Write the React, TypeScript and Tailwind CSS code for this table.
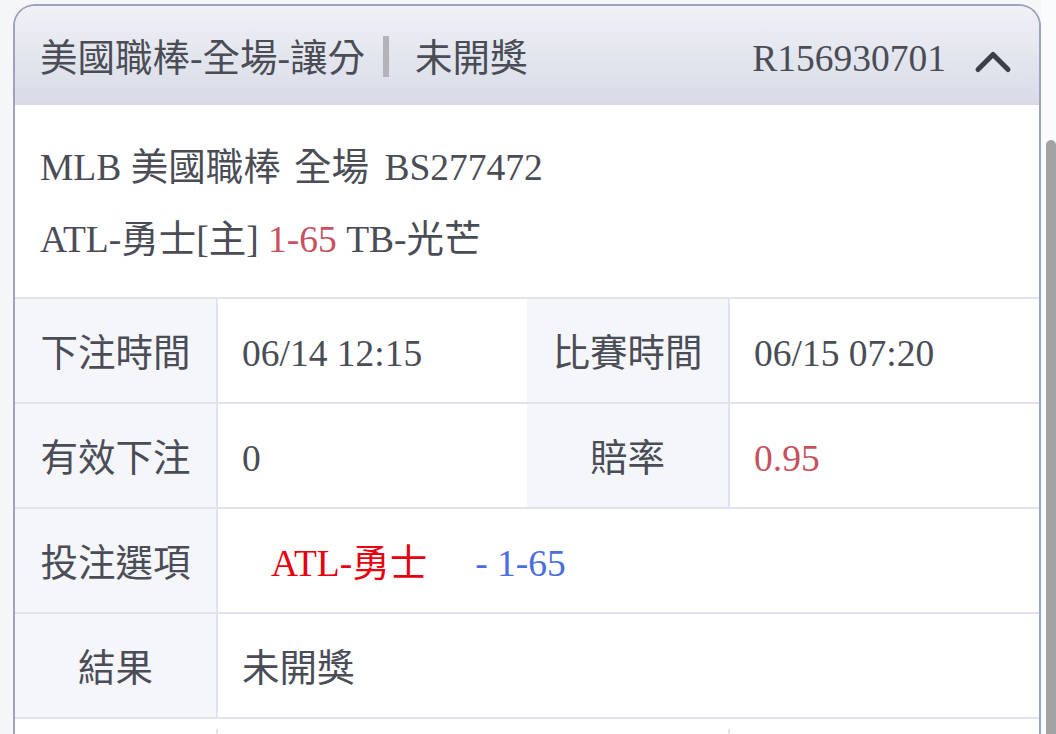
const FONT = 'font-["Liberation_Serif","Noto_Sans_CJK_TC",serif]'

function Label({ children }: { children: React.ReactNode }) {
  return (
    <div className="w-[203px] shrink-0 flex items-center justify-center pt-[8px] bg-[#f5f6fa] border-r-2 border-[#e0e2ef]">
      {children}
    </div>
  )
}

function Value({ children, wide }: { children?: React.ReactNode; wide?: boolean }) {
  return (
    <div className={`${wide ? 'flex-1' : 'w-[309px] shrink-0'} flex items-center pl-6 pt-[8px] bg-white`}>
      {children}
    </div>
  )
}

function Row({ children }: { children: React.ReactNode }) {
  return <div className="flex h-[105px] border-t-2 border-[#e0e2ef]">{children}</div>
}

export default function App() {
  return (
    <div className={`w-[1056px] h-[734px] overflow-hidden bg-[#f5f6f8] flex ${FONT} text-[37.5px] text-[#4a4c56]`}>
      <div className="ml-[13px] mt-[4px] w-[1028px] shrink-0 border-2 border-b-0 border-[#9da2bd] rounded-t-[22px] overflow-hidden bg-white">
        {/* Header */}
        <div className="h-[99px] flex items-center justify-between pl-[25px] pr-[26px] pt-[8px] bg-gradient-to-b from-[#f0f1f6] to-[#d8dbe7]">
          <div className="flex items-center">
            <span>美國職棒-全場-讓分</span>
            <span className="w-[6px] h-[41px] bg-[#b3b4ba] ml-[18px] mr-[26px] -mt-[6px]" />
            <span>未開獎</span>
          </div>
          <div className="flex items-center">
            <span>R156930701</span>
            <svg className="ml-[27px] mt-[4px]" width="40" height="24" viewBox="0 0 40 24">
              <polyline
                points="5,19.5 20,4.5 35,19.5"
                fill="none"
                stroke="#3d3f48"
                strokeWidth="5"
                strokeLinecap="round"
                strokeLinejoin="round"
              />
            </svg>
          </div>
        </div>

        {/* Match info */}
        <div className="pt-[27px] pb-[21px] pl-[25px] leading-[72px]">
          <div>
            MLB 美國職棒<span className="ml-[4px]"> 全場</span>
            <span className="ml-[6px]"> BS277472</span>
          </div>
          <div>
            ATL-勇士[主] <span className="text-[#c8515f]">1-65</span> TB-光芒
          </div>
        </div>

        {/* Table */}
        <Row>
          <Label>下注時間</Label>
          <Value>06/14 12:15</Value>
          <Label>比賽時間</Label>
          <Value>06/15 07:20</Value>
        </Row>
        <Row>
          <Label>有效下注</Label>
          <Value>0</Value>
          <Label>賠率</Label>
          <Value>
            <span className="text-[#c8515f]">0.95</span>
          </Value>
        </Row>
        <Row>
          <Label>投注選項</Label>
          <Value wide>
            <span className="ml-[29px] text-[#e8000f]">ATL-勇士</span>
            <span className="ml-[48px] text-[#4a6ee0]">- 1-65</span>
          </Value>
        </Row>
        <Row>
          <Label>結果</Label>
          <Value wide>未開獎</Value>
        </Row>
        <div className="flex h-[105px] border-t-2 border-[#e0e2ef] bg-white">
          <div className="w-[203px] shrink-0 border-r-2 border-[#e0e2ef] mt-[10px]" />
          <div className="w-[309px] shrink-0" />
          <div className="w-[203px] shrink-0 border-r-2 border-[#e0e2ef] mt-[10px]" />
          <div className="flex-1" />
        </div>
      </div>

      {/* Scrollbar */}
      <div className="flex-1 bg-[#fafbfc] pl-[5px]">
        <div className="mt-[140px] h-[600px] bg-[#a3a3a3] rounded-t-[5px]" />
      </div>
    </div>
  )
}
